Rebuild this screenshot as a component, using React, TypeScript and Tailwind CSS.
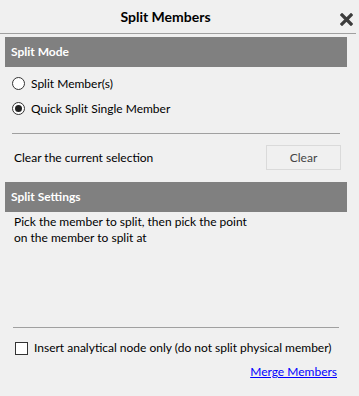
import React from "react";

export default function App() {
  return (
    <div
      className="w-[359px] h-[396px] bg-[#f0f0f0] text-[12px] text-black flex flex-col whitespace-nowrap"
      style={{ fontFamily: 'Lato, "Noto Sans", sans-serif' }}
    >
      {/* Title bar */}
      <div className="relative h-[34px] flex items-center justify-center border-b border-[#a0a0a0] mr-[3px] pr-[25px]">
        <span className="text-[14px] font-bold leading-none">Split Members</span>
        <svg
          className="absolute right-[3px] top-[13px]"
          width="13"
          height="13"
          viewBox="0 0 13 13"
        >
          <path d="M2 2 L11 11 M11 2 L2 11" stroke="#3c3c3c" strokeWidth="3.2" strokeLinecap="square" />
        </svg>
      </div>

      <div className="px-[5px] pr-[12px] mt-[3px]">
        <div className="h-[30px] bg-[#808080] text-white font-bold flex items-center pl-[6px]">
          Split Mode
        </div>
      </div>

      <div className="flex flex-col pl-[12px] pr-[18px]">
        <label className="flex items-center h-[25px] mt-[4px]">
          <span className="w-[13px] h-[13px] rounded-full border border-[#333] bg-white" />
          <span className="ml-[6px]">Split Member(s)</span>
        </label>
        <label className="flex items-center h-[25px]">
          <span className="w-[13px] h-[13px] rounded-full border border-[#333] bg-white flex items-center justify-center">
            <span className="w-[7px] h-[7px] rounded-full bg-[#222]" />
          </span>
          <span className="ml-[6px]">Quick Split Single Member</span>
        </label>
        <div className="h-px bg-[#a0a0a0] mt-[12px] mr-[1px]" />
        <div className="flex items-center justify-between mt-[11px]">
          <span className="ml-[2px]">Clear the current selection</span>
          <button className="w-[75px] h-[25px] border border-[#dadada] bg-[#f0f0f0] text-[#444]">
            Clear
          </button>
        </div>
      </div>

      <div className="px-[5px] pr-[12px] mt-[12px]">
        <div className="h-[30px] bg-[#808080] text-white font-bold flex items-center pl-[6px]">
          Split Settings
        </div>
      </div>
      <div className="pl-[14px] leading-[16px] mt-[2px]">
        <div>Pick the member to split, then pick the point</div>
        <div>on the member to split at</div>
      </div>

      <div className="flex-1" />

      <div className="pl-[13px] pr-[20px]">
        <div className="h-px bg-[#a0a0a0]" />
        <label className="flex items-center h-[20px] mt-[10px] pl-[2px]">
          <span className="w-[13px] h-[13px] border border-[#333] bg-white shrink-0" />
          <span className="ml-[6px]">Insert analytical node only (do not split physical member)</span>
        </label>
        <div className="flex justify-end mt-[6px] mb-[16px] leading-[16px] mr-[2px]">
          <a className="text-[#0000ff] underline cursor-pointer">Merge Members</a>
        </div>
      </div>
    </div>
  );
}
